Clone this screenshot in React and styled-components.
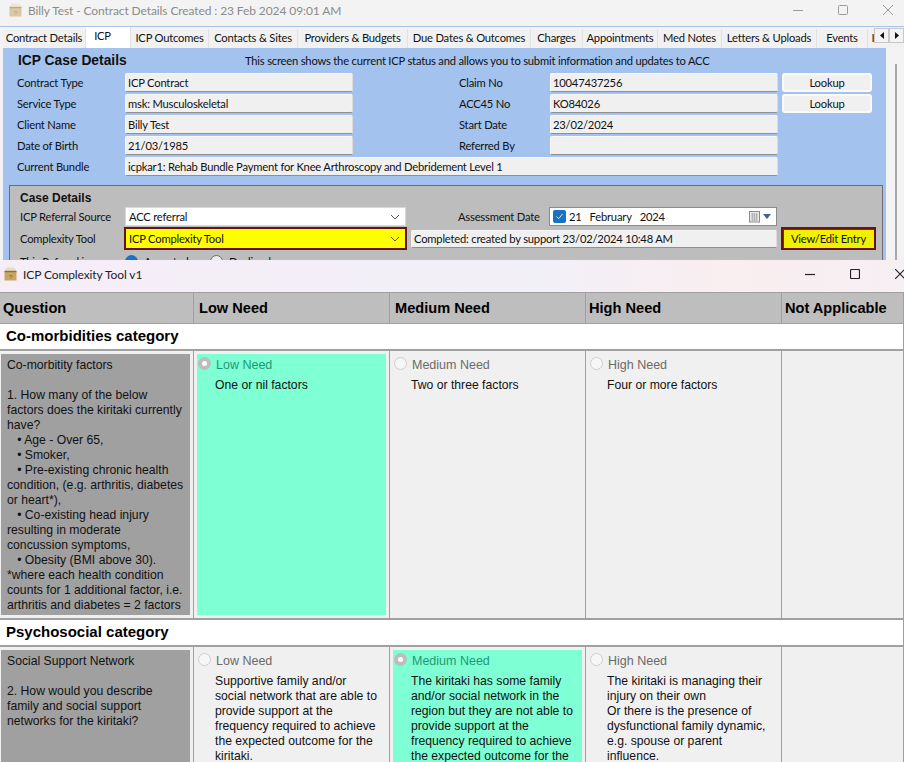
import React from 'react';
import styled, { createGlobalStyle } from 'styled-components';

const GlobalStyle = createGlobalStyle`
	html, body {
		margin: 0;
		padding: 0;
		background: #f0f0f0;
		font-family: "Liberation Sans", Arial, sans-serif;
	}
	* {
		box-sizing: border-box;
	}
`;

const uiFont = `Lato, "Liberation Sans", sans-serif`;

const tabs = [
	{ label: 'Contract Details', w: 83 },
	{ label: 'ICP', w: 45, active: true },
	{ label: 'ICP Outcomes', w: 78 },
	{ label: 'Contacts & Sites', w: 89 },
	{ label: 'Providers & Budgets', w: 110 },
	{ label: 'Due Dates & Outcomes', w: 123 },
	{ label: 'Charges', w: 52 },
	{ label: 'Appointments', w: 75 },
	{ label: 'Med Notes', w: 64 },
	{ label: 'Letters & Uploads', w: 95 },
	{ label: 'Events', w: 51 },
	{ label: 'Invoices', w: 46 },
];

const rowOne = [
	{
		kind: 'low',
		label: 'Low Need',
		selected: true,
		text: 'One or nil factors',
	},
	{
		kind: 'medium',
		label: 'Medium Need',
		text: 'Two or three factors',
	},
	{
		kind: 'high',
		label: 'High Need',
		text: 'Four or more factors',
	},
];

const rowTwo = [
	{
		kind: 'low',
		label: 'Low Need',
		text: 'Supportive family and/or\nsocial network that are able to\nprovide support at the\nfrequency required to achieve\nthe expected outcome for the\nkiritaki.',
	},
	{
		kind: 'medium',
		label: 'Medium Need',
		selected: true,
		text: 'The kiritaki has some family\nand/or social network in the\nregion but they are not able to\nprovide support at the\nfrequency required to achieve\nthe expected outcome for the\nkiritaki.',
	},
	{
		kind: 'high',
		label: 'High Need',
		text: 'The kiritaki is managing their\ninjury on their own\nOr there is the presence of\ndysfunctional family dynamic,\ne.g. spouse or parent\ninfluence.',
	},
];

const questionOne =
	'Co-morbitity factors\n\n1. How many of the below\nfactors does the kiritaki currently\nhave?\n   • Age - Over 65,\n   • Smoker,\n   • Pre-existing chronic health\ncondition, (e.g. arthritis, diabetes\nor heart*),\n   • Co-existing head injury\nresulting in moderate\nconcussion symptoms,\n   • Obesity (BMI above 30).\n*where each health condition\ncounts for 1 additional factor, i.e.\narthritis and diabetes = 2 factors';

const questionTwo =
	'Social Support Network\n\n2. How would you describe\nfamily and social support\nnetworks for the kiritaki?';

const Page = styled.div`
	position: relative;
	width: 904px;
	height: 762px;
	overflow: hidden;
	background: #f0f0f0;
`;

const BackWindow = styled.div`
	height: 260px;
	overflow: hidden;
	background: #f3f3f3;
`;

const TitleBar = styled.div`
	display: flex;
	align-items: center;
	height: ${(p) => (p.$front ? '32px' : '26px')};
	padding-left: ${(p) => (p.$front ? '4px' : '9px')};
	padding-bottom: ${(p) => (p.$front ? '4px' : '6px')};
	background: ${(p) =>
		p.$front ? 'linear-gradient(90deg, #f6edf7 0%, #f2f0f7 60%, #f9eef0 80%, #f6eff3 100%)' : '#f3f3f3'};
	color: ${(p) => (p.$front ? '#222' : '#8b8b8b')};
	font-family: ${uiFont};
	font-size: 12px;
	letter-spacing: -0.1px;
`;

const TitleText = styled.span`
	margin-left: 6px;
	flex: 1;
	white-space: nowrap;
`;

const WindowControls = styled.div`
	display: flex;
	align-items: center;
	gap: 35px;
	margin-right: ${(p) => (p.$front ? '-1px' : '11px')};
	color: ${(p) => (p.$front ? '#222' : '#9a9a9a')};
`;

const TabStrip = styled.div`
	position: relative;
	display: flex;
	align-items: flex-end;
	height: 22px;
	padding-left: 3px;
	overflow: hidden;
	background: #f3f3f3;
	border-top: 1px solid #a5c3ee;
`;

const Tab = styled.div`
	flex: none;
	width: ${(p) => p.$w}px;
	height: ${(p) => (p.$active ? '21px' : '19px')};
	padding-top: 2px;
	padding-right: ${(p) => (p.$active ? '11px' : 0)};
	text-align: center;
	font-family: ${uiFont};
	font-size: 11.2px;
	letter-spacing: -0.2px;
	line-height: 14px;
	white-space: nowrap;
	color: #111;
	background: ${(p) => (p.$active ? '#ffffff' : '#f1f1f1')};
	border-right: 1px solid #e2e2e2;
	overflow: hidden;
`;

const TabScroller = styled.div`
	position: absolute;
	left: 874px;
	top: 1px;
	display: flex;
	width: 30px;
	height: 15px;
`;

const ScrollButton = styled.div`
	display: flex;
	align-items: center;
	justify-content: center;
	width: 15px;
	height: 15px;
	background: #f3f3f3;
	border: 1px solid #c8c8c8;
`;

const Body = styled.div`
	display: flex;
	height: 212px;
`;

const BluePanel = styled.div`
	width: 883px;
	margin-left: 3px;
	padding: 2px 0 0 6px;
	background: #a3c3ee;
	font-family: ${uiFont};
	font-size: 11.2px;
	letter-spacing: -0.2px;
	color: #111;
`;

const ScrollGutter = styled.div`
	flex: 1;
	margin: 16px 0 0 9px;
	border-left: 2px solid #a8a8a8;
`;

const PanelHead = styled.div`
	display: flex;
	align-items: center;
	height: 21px;
	margin-bottom: 2px;
`;

const Heading = styled.h2`
	margin: 0;
	width: ${(p) => (p.$w ? `${p.$w}px` : 'auto')};
	padding-left: ${(p) => p.$pad || 0}px;
	font-family: "Liberation Sans", sans-serif;
	font-size: ${(p) => p.$size}px;
	font-weight: 700;
	letter-spacing: 0;
	white-space: nowrap;
`;

const Hint = styled.span`
	white-space: nowrap;
`;

const FormGrid = styled.div`
	display: grid;
	grid-template-columns: 108px 228px 106px 91px 228px 94px;
	grid-auto-rows: 19px;
	row-gap: 2px;
	margin: 0 0 0 8px;
`;

const FieldLabel = styled.label`
	display: flex;
	align-items: center;
	white-space: nowrap;
	grid-column: ${(p) => p.$col};
`;

const ReadField = styled.div`
	display: flex;
	align-items: center;
	padding-left: 2px;
	background: #f0f0f0;
	border-radius: 2px;
	border-top: 1px solid #f7f7f7;
	border-left: 1px solid #f7f7f7;
	border-right: 1px solid #dcdcdc;
	border-bottom: 1px solid #8f8f8f;
	white-space: nowrap;
	grid-column: ${(p) => p.$col || 'auto'};
`;

const LookupButton = styled.button`
	margin-left: 4px;
	padding: 0;
	font: inherit;
	letter-spacing: inherit;
	color: #111;
	background: #f0f0f0;
	border: 2px solid #fafafa;
	border-radius: 3px;
`;

const CaseGroup = styled.section`
	width: 874px;
	height: 120px;
	margin: 9px 0 0 0;
	padding: 5px 0 0 10px;
	background: #bdbdbd;
	border: 1px solid #6d6d6d;
`;

const CaseRow = styled.div`
	display: flex;
	align-items: center;
	height: ${(p) => p.$h}px;
`;

const CaseLabel = styled.span`
	width: ${(p) => p.$w}px;
	flex: none;
	white-space: nowrap;
`;

const DateLabel = styled(CaseLabel)`
	padding-left: 52px;
`;

const Select = styled.div`
	display: flex;
	align-items: center;
	justify-content: space-between;
	flex: none;
	width: ${(p) => (p.$flag ? '283px' : '281px')};
	height: ${(p) => (p.$flag ? '23px' : '19px')};
	margin-left: ${(p) => (p.$flag ? '-1px' : 0)};
	padding: 0 5px 0 3px;
	background: ${(p) => (p.$flag ? '#ffff00' : '#ffffff')};
	border: ${(p) => (p.$flag ? '2px solid #6b1313' : '1px solid #d8d8d8')};
	white-space: nowrap;
`;

const DatePicker = styled.div`
	display: flex;
	align-items: center;
	flex: none;
	width: 228px;
	height: 19px;
	padding: 0 5px 0 3px;
	background: #ffffff;
	border: 1px solid #8a8a8a;
`;

const DateCheck = styled.span`
	display: flex;
	align-items: center;
	justify-content: center;
	width: 13px;
	height: 13px;
	margin-right: 3px;
	border-radius: 2px;
	background: #1b72c4;
`;

const DatePart = styled.span`
	margin-right: ${(p) => p.$gap}px;
`;

const DateIcons = styled.span`
	display: flex;
	align-items: center;
	gap: 2px;
	margin-left: auto;
`;

const StatusField = styled(ReadField)`
	flex: none;
	width: 366px;
	height: 18px;
	margin-left: 4px;
`;

const EntryButton = styled.button`
	flex: none;
	width: 95px;
	height: 23px;
	margin-left: 4px;
	padding: 0;
	font: inherit;
	letter-spacing: inherit;
	color: #111;
	background: #f0f000;
	border: 2px solid #6b1313;
	box-shadow: inset 1px 1px 0 #1d5a1d;
`;

const ReferralRow = styled.div`
	display: flex;
	align-items: center;
	margin-top: 6px;
`;

const RadioDot = styled.span`
	width: 13px;
	height: 13px;
	margin-right: 6px;
	flex: none;
	border-radius: 50%;
	background: ${(p) => (p.$on ? '#1b72c4' : '#ececec')};
	border: 1px solid ${(p) => (p.$on ? '#1b72c4' : '#6d6d6d')};
`;

const RadioText = styled.span`
	width: 66px;
`;

const Dialog = styled.div`
	position: absolute;
	left: 0;
	top: 260px;
	width: 904px;
	height: 502px;
	overflow: hidden;
	background: #f0f0f0;
`;

const Table = styled.div`
	font-size: 12.2px;
	color: #111;
	border-right: 1px solid #a0a0a0;
`;

const columns = '193px 196px 196px 196px 1fr';

const HeaderRow = styled.div`
	display: grid;
	grid-template-columns: ${columns};
	height: 32px;
	background: #bebebe;
	border-top: 1px solid #a0a0a0;
	border-bottom: 1px solid #a0a0a0;
`;

const HeaderCell = styled.div`
	display: flex;
	align-items: center;
	padding-left: ${(p) => p.$pad}px;
	border-left: ${(p) => (p.$first ? 'none' : '1px solid #a0a0a0')};
	font-size: 14.6px;
	font-weight: 700;
	color: #000;
	white-space: nowrap;
`;

const CategoryRow = styled.div`
	display: flex;
	align-items: center;
	height: 25px;
	padding: 0 0 2px 6px;
	background: #ffffff;
	font-size: 15px;
	font-weight: 700;
	color: #000;
`;

const CriterionRow = styled.div`
	display: grid;
	grid-template-columns: ${columns};
	height: ${(p) => p.$h}px;
	background: #f0f0f0;
	border-top: 2px solid #a0a0a0;
	border-bottom: ${(p) => (p.$end ? '2px solid #a0a0a0' : 'none')};
`;

const QuestionCell = styled.div`
	margin: 3px 3px 3px 1px;
	padding: 4px 0 0 6px;
	background: #a0a0a0;
	line-height: 15px;
	white-space: pre;
	overflow: hidden;
`;

const AnswerCell = styled.div`
	padding: 3px;
	border-left: 1px solid #a0a0a0;
	overflow: hidden;
`;

const AnswerBox = styled.div`
	height: 100%;
	padding: 2px 0 0 1px;
	background: ${(p) => (p.$selected ? '#7fffd4' : 'transparent')};
`;

const AnswerHead = styled.div`
	display: flex;
	align-items: center;
	height: 17px;
	font-size: 12.5px;
	color: ${(p) => (p.$selected ? '#1c9a72' : '#6b6b6b')};
`;

const AnswerRadio = styled.span`
	position: relative;
	flex: none;
	width: 13px;
	height: 13px;
	margin: -2px 5px 0 0;
	border-radius: 50%;
	background: ${(p) => (p.$selected ? '#bdbdbd' : '#f6f6f6')};
	border: 1px solid ${(p) => (p.$selected ? '#bdbdbd' : '#cfcfcf')};

	&::after {
		content: '';
		display: ${(p) => (p.$selected ? 'block' : 'none')};
		position: absolute;
		left: 3px;
		top: 3px;
		width: 5px;
		height: 5px;
		border-radius: 50%;
		background: #ffffff;
	}
`;

const AnswerText = styled.div`
	margin: 5px 0 0 17px;
	line-height: 15px;
	white-space: pre;
`;

function BoxIcon({ faded }) {
	return (
		<svg width="13" height="14" viewBox="0 0 13 14" opacity={faded ? 0.55 : 1} style={{ flex: 'none' }}>
			<path d="M1 2.5 L3 0.5 H10 L12 2.5 V4.5 H1 Z" fill="#e9dcc0" />
			<rect x="0.5" y="4.5" width="12" height="9" fill="#c9a463" />
			<rect x="0.5" y="3.8" width="12" height="1.4" fill="#8f6f3b" />
			<text x="6.5" y="11.5" fontSize="6" fontFamily="Liberation Sans" textAnchor="middle" fill="#7d5e2c">?</text>
		</svg>
	);
}

function ControlIcons({ front }) {
	const w = front ? 1.2 : 1;
	return (
		<WindowControls $front={front}>
			<svg width="10" height="10" viewBox="0 0 10 10">
				<path d="M0 5.5 H10" stroke="currentColor" strokeWidth={w} />
			</svg>
			<svg width="10" height="10" viewBox="0 0 10 10">
				<rect x="0.5" y="0.5" width="9" height="9" rx="1" fill="none" stroke="currentColor" strokeWidth={w} />
			</svg>
			<svg width="10" height="10" viewBox="0 0 10 10">
				<path d="M0 0 L10 10 M10 0 L0 10" stroke="currentColor" strokeWidth={w} />
			</svg>
		</WindowControls>
	);
}

function Chevron() {
	return (
		<svg width="10" height="6" viewBox="0 0 10 6">
			<path d="M1 1 L5 5 L9 1" fill="none" stroke="#555" strokeWidth="1" />
		</svg>
	);
}

function ScrollArrow({ dir }) {
	return (
		<svg width="4" height="7" viewBox="0 0 4 7">
			<path d={dir === 'left' ? 'M4 0 V7 L0 3.5 Z' : 'M0 0 V7 L4 3.5 Z'} fill="#111" />
		</svg>
	);
}

function Answer({ item }) {
	return (
		<AnswerCell>
			<AnswerBox $selected={item.selected}>
				<AnswerHead $selected={item.selected}>
					<AnswerRadio $selected={item.selected} />
					{item.label}
				</AnswerHead>
				<AnswerText>{item.text}</AnswerText>
			</AnswerBox>
		</AnswerCell>
	);
}

export default function App() {
	return (
		<Page>
			<GlobalStyle />
			<BackWindow>
				<TitleBar>
					<BoxIcon faded />
					<TitleText>Billy Test - Contract Details Created : 23 Feb 2024 09:01 AM</TitleText>
					<ControlIcons />
				</TitleBar>
				<TabStrip>
					{tabs.map((t) => (
						<Tab key={t.label} $w={t.w} $active={t.active}>
							{t.label}
						</Tab>
					))}
					<TabScroller>
						<ScrollButton><ScrollArrow dir="left" /></ScrollButton>
						<ScrollButton><ScrollArrow dir="right" /></ScrollButton>
					</TabScroller>
				</TabStrip>
				<Body>
					<BluePanel>
						<PanelHead>
							<Heading $w={236} $pad={9} $size={13.8}>ICP Case Details</Heading>
							<Hint>This screen shows the current ICP status and allows you to submit information and updates to ACC</Hint>
						</PanelHead>
						<FormGrid>
							<FieldLabel $col="1">Contract Type</FieldLabel>
							<ReadField>ICP Contract</ReadField>
							<FieldLabel $col="4">Claim No</FieldLabel>
							<ReadField>10047437256</ReadField>
							<LookupButton>Lookup</LookupButton>
							<FieldLabel $col="1">Service Type</FieldLabel>
							<ReadField>msk: Musculoskeletal</ReadField>
							<FieldLabel $col="4">ACC45 No</FieldLabel>
							<ReadField>KO84026</ReadField>
							<LookupButton>Lookup</LookupButton>
							<FieldLabel $col="1">Client Name</FieldLabel>
							<ReadField>Billy Test</ReadField>
							<FieldLabel $col="4">Start Date</FieldLabel>
							<ReadField>23/02/2024</ReadField>
							<FieldLabel $col="1">Date of Birth</FieldLabel>
							<ReadField>21/03/1985</ReadField>
							<FieldLabel $col="4">Referred By</FieldLabel>
							<ReadField $col="5" />
							<FieldLabel $col="1">Current Bundle</FieldLabel>
							<ReadField $col="2 / 6">icpkar1: Rehab Bundle Payment for Knee Arthroscopy and Debridement Level 1</ReadField>
						</FormGrid>
						<CaseGroup>
							<Heading $size={12}>Case Details</Heading>
							<CaseRow $h={23}>
								<CaseLabel $w={105}>ICP Referral Source</CaseLabel>
								<Select>
									ACC referral
									<Chevron />
								</Select>
								<DateLabel $w={143}>Assessment Date</DateLabel>
								<DatePicker>
									<DateCheck>
										<svg width="9" height="9" viewBox="0 0 9 9">
											<path d="M1.5 4.5 L3.7 6.7 L7.5 2" fill="none" stroke="#cfe4f8" strokeWidth="1" />
										</svg>
									</DateCheck>
									<DatePart $gap={8}>21</DatePart>
									<DatePart $gap={8}>February</DatePart>
									<DatePart $gap={0}>2024</DatePart>
									<DateIcons>
										<svg width="12" height="12" viewBox="0 0 12 12">
											<rect x="0.5" y="0.5" width="10" height="10.5" fill="#e8e8e8" stroke="#8a8a8a" />
											<path d="M2 3 H9 M2 5 H9 M2 7 H9 M2 9 H9 M3.5 2 V10 M5.5 2 V10 M7.5 2 V10" stroke="#a8a8a8" strokeWidth="0.7" />
										</svg>
										<svg width="8" height="5" viewBox="0 0 8 5">
											<path d="M0 0 H8 L4 5 Z" fill="#4c5f86" />
										</svg>
									</DateIcons>
								</DatePicker>
							</CaseRow>
							<CaseRow $h={21}>
								<CaseLabel $w={105}>Complexity Tool</CaseLabel>
								<Select $flag>
									ICP Complexity Tool
									<Chevron />
								</Select>
								<StatusField>Completed:  created by support 23/02/2024 10:48 AM</StatusField>
								<EntryButton>View/Edit Entry</EntryButton>
							</CaseRow>
							<ReferralRow>
								<CaseLabel $w={105}>This Referral is</CaseLabel>
								<RadioDot $on />
								<RadioText>Accepted</RadioText>
								<RadioDot />
								<RadioText>Declined</RadioText>
							</ReferralRow>
						</CaseGroup>
					</BluePanel>
					<ScrollGutter />
				</Body>
			</BackWindow>
			<Dialog>
				<TitleBar $front>
					<BoxIcon />
					<TitleText>ICP Complexity Tool v1</TitleText>
					<ControlIcons front />
				</TitleBar>
				<Table>
					<HeaderRow>
						<HeaderCell $first $pad={3}>Question</HeaderCell>
						<HeaderCell $pad={5}>Low Need</HeaderCell>
						<HeaderCell $pad={5}>Medium Need</HeaderCell>
						<HeaderCell $pad={3}>High Need</HeaderCell>
						<HeaderCell $pad={3}>Not Applicable</HeaderCell>
					</HeaderRow>
					<CategoryRow>Co-morbidities category</CategoryRow>
					<CriterionRow $h={271} $end>
						<QuestionCell>{questionOne}</QuestionCell>
						{rowOne.map((item) => (
							<Answer key={item.kind} item={item} />
						))}
						<AnswerCell />
					</CriterionRow>
					<CategoryRow>Psychosocial category</CategoryRow>
					<CriterionRow $h={150}>
						<QuestionCell>{questionTwo}</QuestionCell>
						{rowTwo.map((item) => (
							<Answer key={item.kind} item={item} />
						))}
						<AnswerCell />
					</CriterionRow>
				</Table>
			</Dialog>
		</Page>
	);
}
